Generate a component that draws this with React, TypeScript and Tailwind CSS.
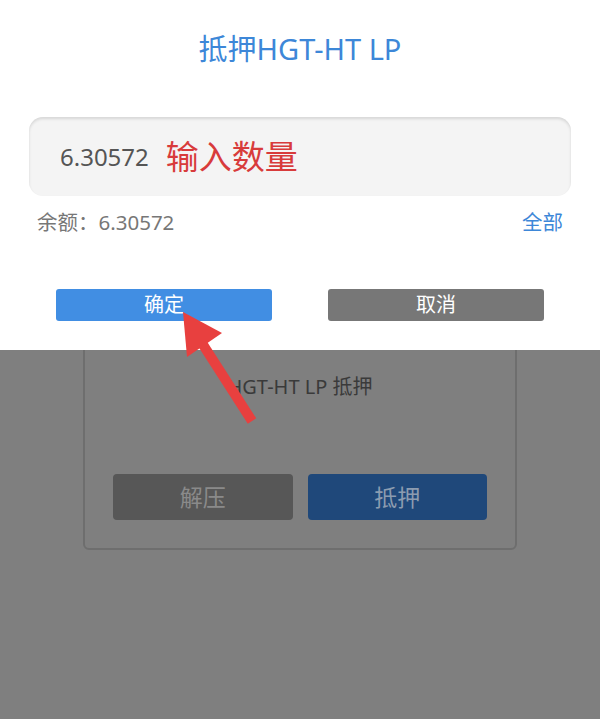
import React from "react";

const font = { fontFamily: '"Noto Sans", "Noto Sans CJK SC", sans-serif' };

export default function App() {
  return (
    <div className="relative h-[719px] w-[600px] overflow-hidden bg-[#7f7f7f]" style={font}>
      {/* dimmed page behind */}
      <div className="flex flex-col pt-[250px]">
        <div className="mx-[83px] flex w-[434px] flex-col rounded-[6px] border-2 border-[#6e6e6e] px-[28px] pb-[28px]">
          <div className="mt-[118px] text-center text-[20px] leading-[34px] text-[#3a3a3a]">HGT-HT LP 抵押</div>
          <div className="mt-[70px] flex gap-[15px]">
            <div className="flex h-[46px] flex-1 items-center justify-center rounded-[4px] bg-[#575757] text-[23px] text-[#8a8a8a]">解压</div>
            <div className="flex h-[46px] flex-1 items-center justify-center rounded-[4px] bg-[#1f487a] text-[23px] text-[#8c9cb0]">抵押</div>
          </div>
        </div>
      </div>

      {/* top sheet */}
      <div className="absolute inset-x-0 top-0 flex h-[350px] flex-col bg-white">
        <div className="mt-[28px] text-center text-[29px] leading-[42px] text-[#3d87d8]">抵押HGT-HT LP</div>
        <div className="mx-[29px] mt-[47px] flex h-[79px] items-center rounded-[14px] bg-[#f4f4f4] pl-[31px] shadow-[inset_0_2px_3px_rgba(0,0,0,0.12)]">
          <span className="text-[24px] text-[#555555]">6.30572</span>
          <span className="ml-[17px] text-[33px] text-[#d83b3b]">输入数量</span>
        </div>
        <div className="mx-[37px] mt-[11px] flex items-center justify-between text-[20.5px] leading-[30px]">
          <span className="text-[#777777]">余额：6.30572</span>
          <span className="text-[#3d87d8]">全部</span>
        </div>
        <div className="mx-[56px] mt-[52px] flex justify-between">
          <div className="flex h-[32px] w-[216px] items-center justify-center rounded-[3px] bg-[#418ee3] text-[20px] text-white">确定</div>
          <div className="flex h-[32px] w-[216px] items-center justify-center rounded-[3px] bg-[#777777] text-[20px] text-white">取消</div>
        </div>
      </div>

      {/* annotation arrow */}
      <svg className="absolute left-0 top-0" width="600" height="719" viewBox="0 0 600 719">
        <line x1="252" y1="421" x2="200" y2="340" stroke="#e8403f" strokeWidth="10" />
        <polygon points="183,312 222,333 187,357" fill="#e8403f" />
      </svg>
    </div>
  );
}
